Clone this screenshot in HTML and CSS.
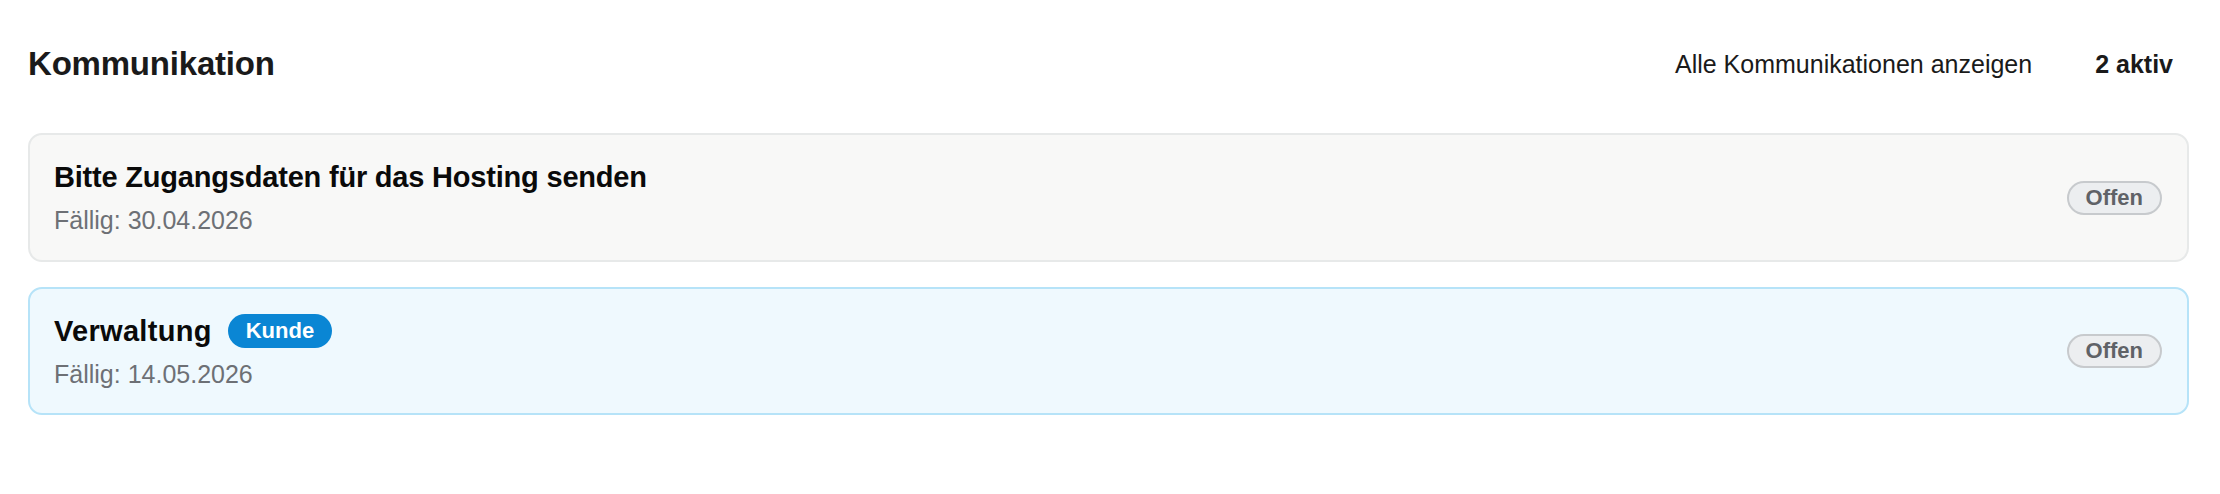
FILE: index.html
```html
<!DOCTYPE html>
<html lang="de">
<head>
<meta charset="utf-8">
<title>Kommunikation</title>
<link rel="stylesheet" href="styles.css">
</head>
<body>
<section class="panel">
  <header class="panel-head">
    <h2 class="panel-title">Kommunikation</h2>
    <div class="panel-actions">
      <a class="link" href="#">Alle Kommunikationen anzeigen</a>
      <span class="count">2 aktiv</span>
    </div>
  </header>
  <div class="list">
    <article class="item">
      <div class="item-main">
        <div class="item-title-row">
          <h3 class="item-title">Bitte Zugangsdaten für das Hosting senden</h3>
        </div>
        <div class="item-date">Fällig: 30.04.2026</div>
      </div>
      <span class="status">Offen</span>
    </article>
    <article class="item item-customer">
      <div class="item-main">
        <div class="item-title-row">
          <h3 class="item-title item-title-wide">Verwaltung</h3>
          <span class="tag">Kunde</span>
        </div>
        <div class="item-date">Fällig: 14.05.2026</div>
      </div>
      <span class="status">Offen</span>
    </article>
  </div>
</section>
</body>
</html>
```

FILE: styles.css
```css
* { box-sizing: border-box; }

html, body {
  margin: 0;
  padding: 0;
  background: #ffffff;
}

body {
  font-family: "Liberation Sans", Arial, sans-serif;
  color: #111111;
}

.panel {
  padding: 44px 31px 0 28px;
}

.panel-head {
  display: flex;
  align-items: center;
  justify-content: space-between;
  height: 40px;
  margin-bottom: 49px;
}

.panel-title {
  margin: 0;
  font-size: 33px;
  line-height: 40px;
  font-weight: 700;
  color: #1a1a1a;
  letter-spacing: -0.2px;
}

.panel-actions {
  display: flex;
  align-items: center;
  gap: 63px;
  padding-right: 16px;
}

.link {
  font-size: 25px;
  line-height: 32px;
  color: #1a1a1a;
  text-decoration: none;
}

.count {
  font-size: 25px;
  line-height: 32px;
  font-weight: 700;
  color: #1a1a1a;
}

.list {
  display: flex;
  flex-direction: column;
  gap: 25px;
}

.item {
  display: flex;
  align-items: center;
  justify-content: space-between;
  height: 129px;
  padding: 0 25px 0 24px;
  border: 2px solid #e7e9e9;
  border-radius: 14px;
  background: #f8f8f7;
}

.item-customer {
  height: 128px;
  border-color: #b6e3f8;
  background: #eff9fe;
}

.item-main {
  display: flex;
  flex-direction: column;
  gap: 10px;
  padding-bottom: 1px;
}

.item-title-row {
  display: flex;
  align-items: center;
  gap: 16px;
  height: 36px;
}

.item-title {
  margin: 0;
  font-size: 29px;
  line-height: 36px;
  font-weight: 700;
  color: #0a0a0a;
  letter-spacing: -0.2px;
}

.item-title-wide {
  letter-spacing: 0.3px;
}

.item-date {
  font-size: 25px;
  line-height: 30px;
  color: #6d7075;
}

.tag {
  display: inline-flex;
  align-items: center;
  height: 34px;
  padding: 0 18px;
  border-radius: 17px;
  background: #0a86d4;
  color: #ffffff;
  font-size: 22px;
  font-weight: 700;
}

.status {
  display: inline-flex;
  align-items: center;
  height: 34px;
  padding: 0 17px;
  border: 2px solid #c7cacd;
  border-radius: 17px;
  background: #eceef0;
  color: #5f6267;
  font-size: 22px;
  font-weight: 700;
}
```
